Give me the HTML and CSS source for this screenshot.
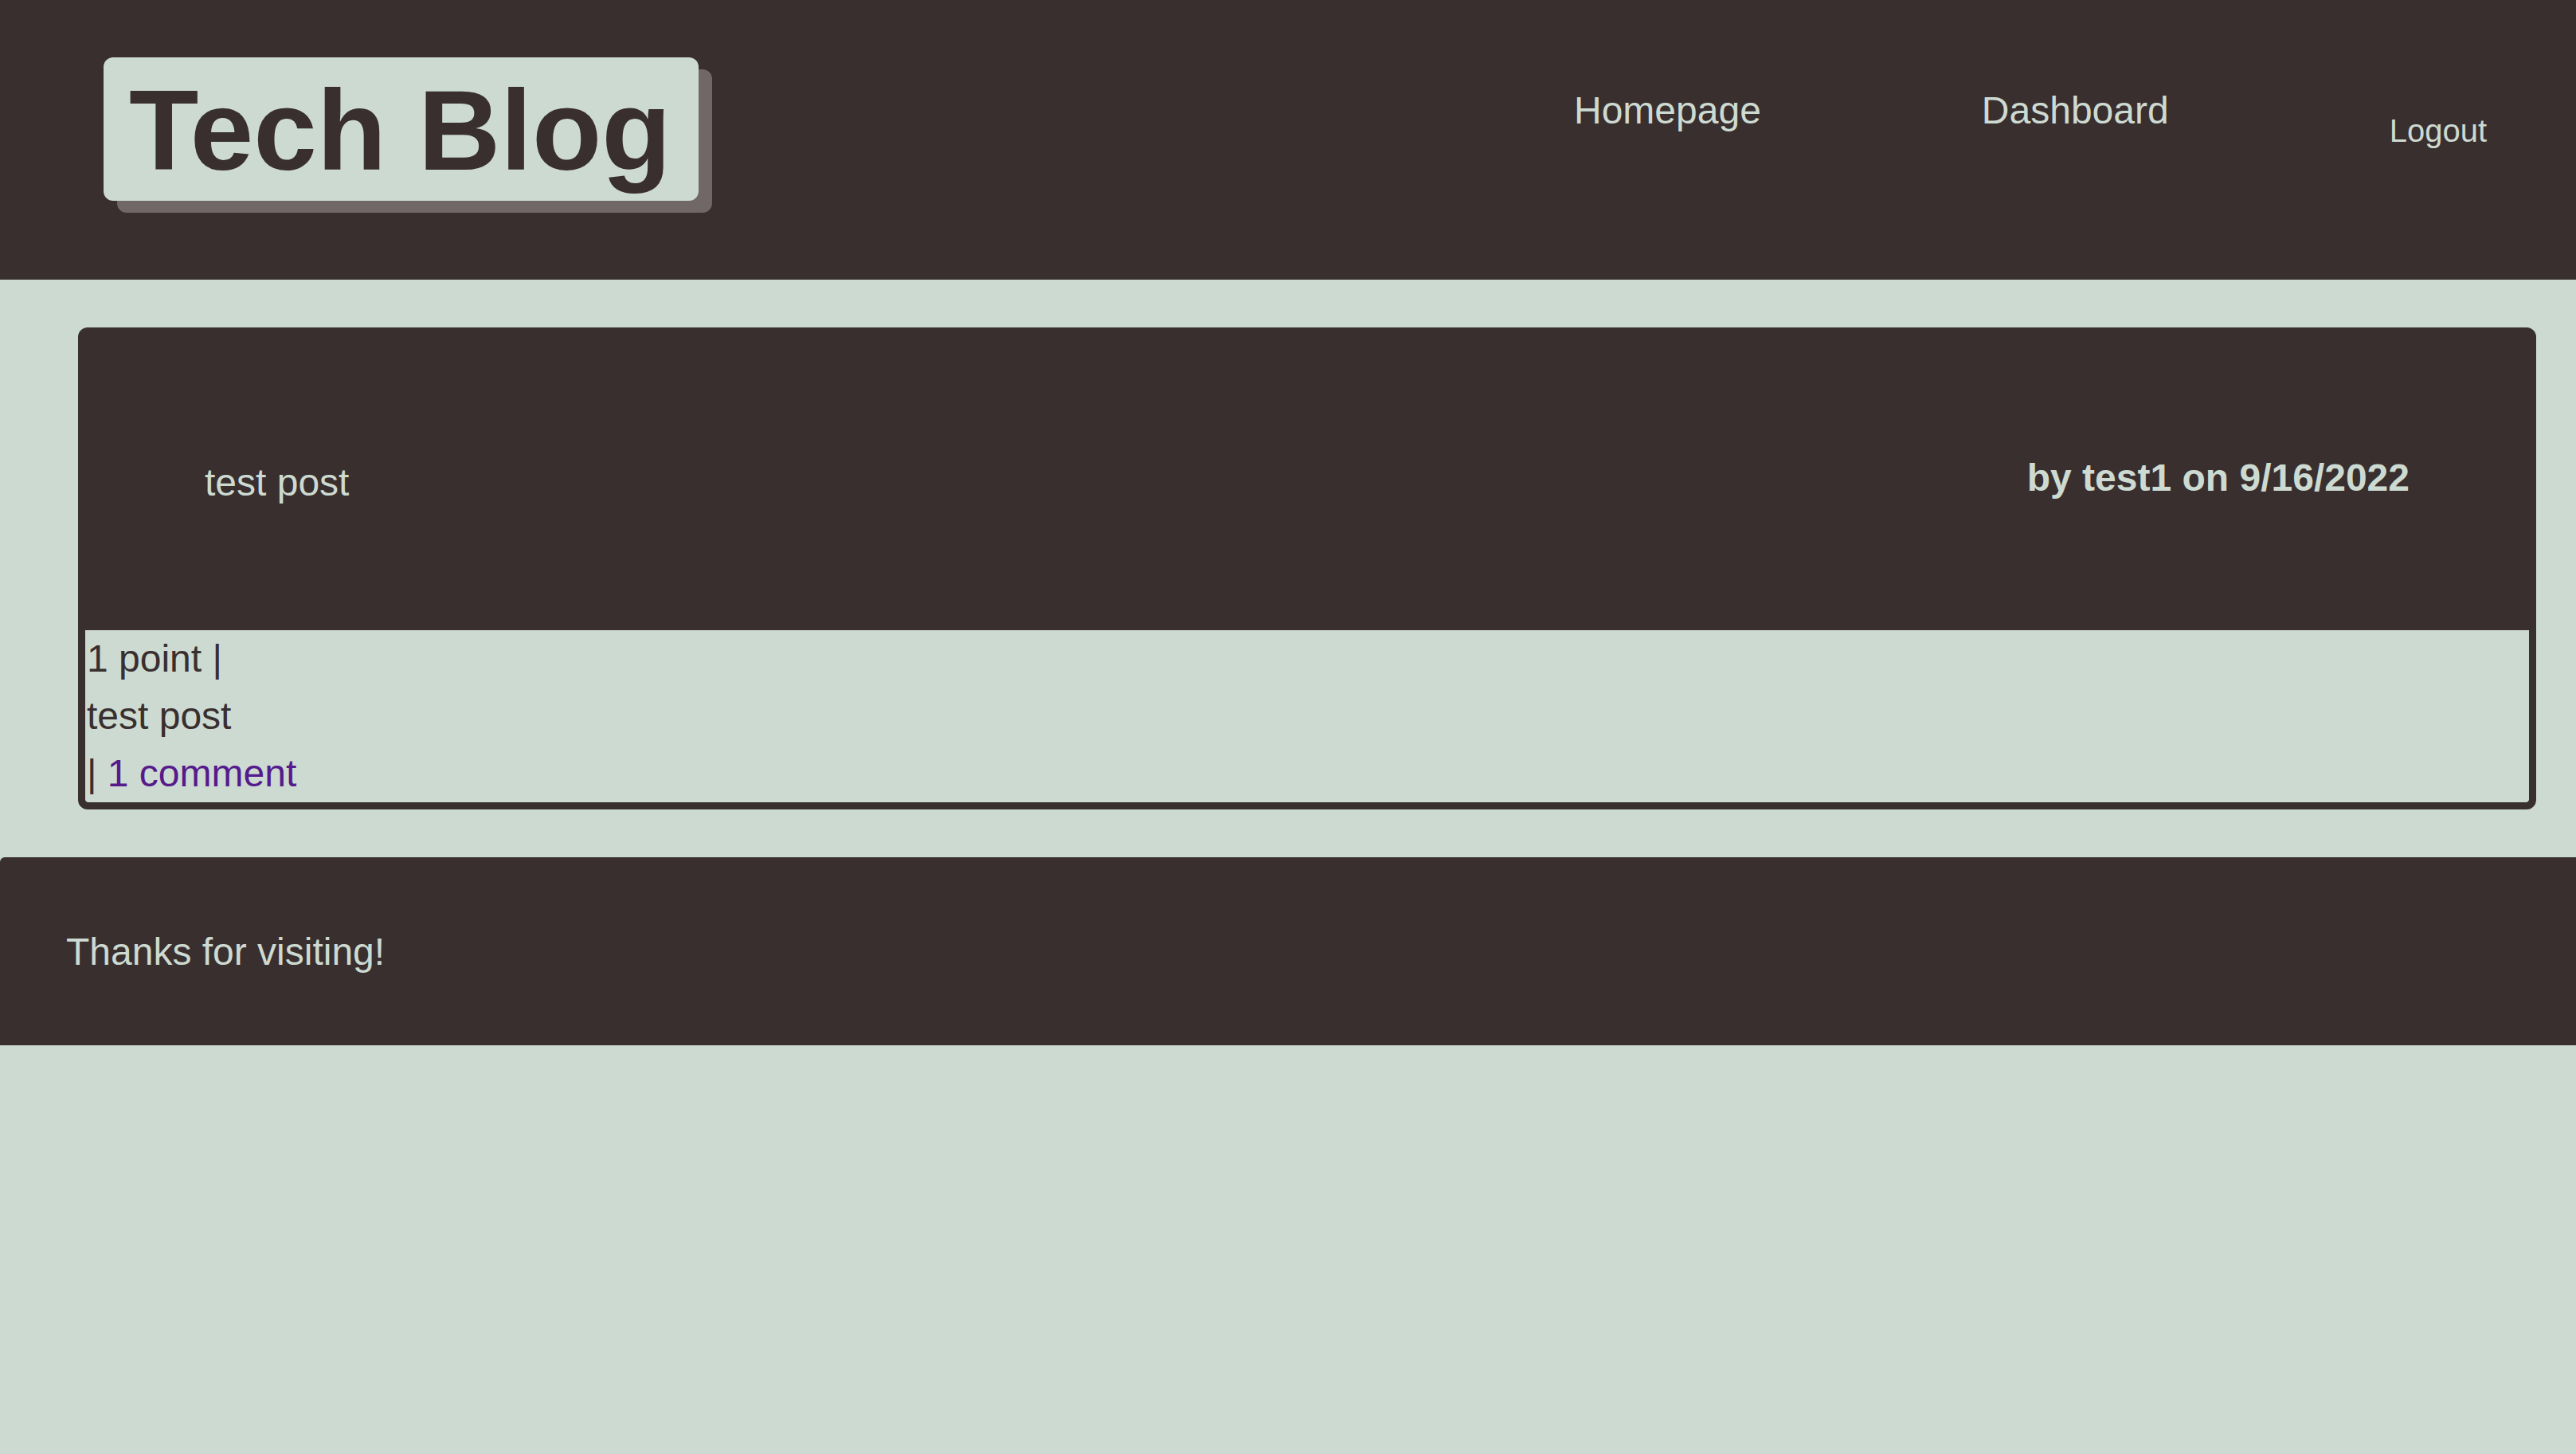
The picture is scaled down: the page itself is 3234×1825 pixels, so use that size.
FILE: index.html
```html
<!DOCTYPE html>
<html lang="en">
<head>
<meta charset="utf-8">
<title>Tech Blog</title>
<link rel="stylesheet" href="styles.css">
</head>
<body>
<header class="site-header">
  <h1 class="logo"><a href="#">Tech Blog</a></h1>
  <nav class="nav">
    <a class="nav-link" href="#">Homepage</a>
    <a class="nav-link" href="#">Dashboard</a>
    <button class="logout" type="button">Logout</button>
  </nav>
</header>
<main class="content">
  <article class="post">
    <div class="post-head">
      <h2 class="post-title">test post</h2>
      <p class="post-meta">by test1 on 9/16/2022</p>
    </div>
    <div class="post-body">
      <div>1 point |</div>
      <div>test post</div>
      <div>| <a class="comment-link" href="#">1 comment</a></div>
    </div>
  </article>
</main>
<footer class="site-footer">Thanks for visiting!</footer>
</body>
</html>
```
FILE: styles.css
```css
* { box-sizing: border-box; }
html, body {
  margin: 0;
  padding: 0;
}
body {
  background: #cddad1;
  color: #392f2f;
  font-family: "Liberation Sans", Arial, sans-serif;
  min-height: 1825px;
}
.site-header {
  background: #392f2f;
  height: 351px;
  display: flex;
  justify-content: space-between;
  align-items: flex-start;
  padding: 72px 0 0 130px;
}
.logo {
  margin: 0;
  width: 747px;
  height: 180px;
  padding: 2px 0 0 32px;
  line-height: 180px;
  font-size: 143px;
  font-weight: bold;
  background: #cddad1;
  border-radius: 12px;
  box-shadow: 17px 15px 0 #716766;
  white-space: nowrap;
}
.logo a {
  color: #392f2f;
  text-decoration: none;
}
.nav {
  display: flex;
  align-items: flex-start;
  gap: 277px;
  margin: 39px 112px 0 0;
}
.nav-link {
  color: #cddad1;
  text-decoration: none;
  font-size: 48px;
  line-height: 55px;
}
.logout {
  margin-top: 30px;
  padding: 0;
  border: 0;
  background: none;
  color: #cddad1;
  font-family: inherit;
  font-size: 40px;
  line-height: 46px;
}
.content {
  padding: 60px 50px 60px 98px;
}
.post {
  background: #392f2f;
  border: 9px solid #392f2f;
  border-radius: 12px;
  overflow: hidden;
}
.post-head {
  height: 371px;
  padding: 0 150px;
  display: flex;
  justify-content: space-between;
  align-items: center;
  color: #cddad1;
}
.post-title {
  margin: 0;
  font-size: 48px;
  font-weight: normal;
  line-height: 55px;
}
.post-meta {
  margin: 0 0 12px;
  font-size: 48px;
  font-weight: bold;
  line-height: 55px;
}
.post-body {
  background: #cddad1;
  font-size: 48px;
  line-height: 72px;
  padding: 0 0 0 2px;
  border-radius: 0 0 4px 4px;
}
.comment-link {
  color: #551a8b;
  text-decoration: none;
}
.site-footer {
  background: #392f2f;
  color: #cddad1;
  height: 236px;
  display: flex;
  align-items: center;
  padding-left: 83px;
  font-size: 48px;
  border-top-left-radius: 6px;
}
```
